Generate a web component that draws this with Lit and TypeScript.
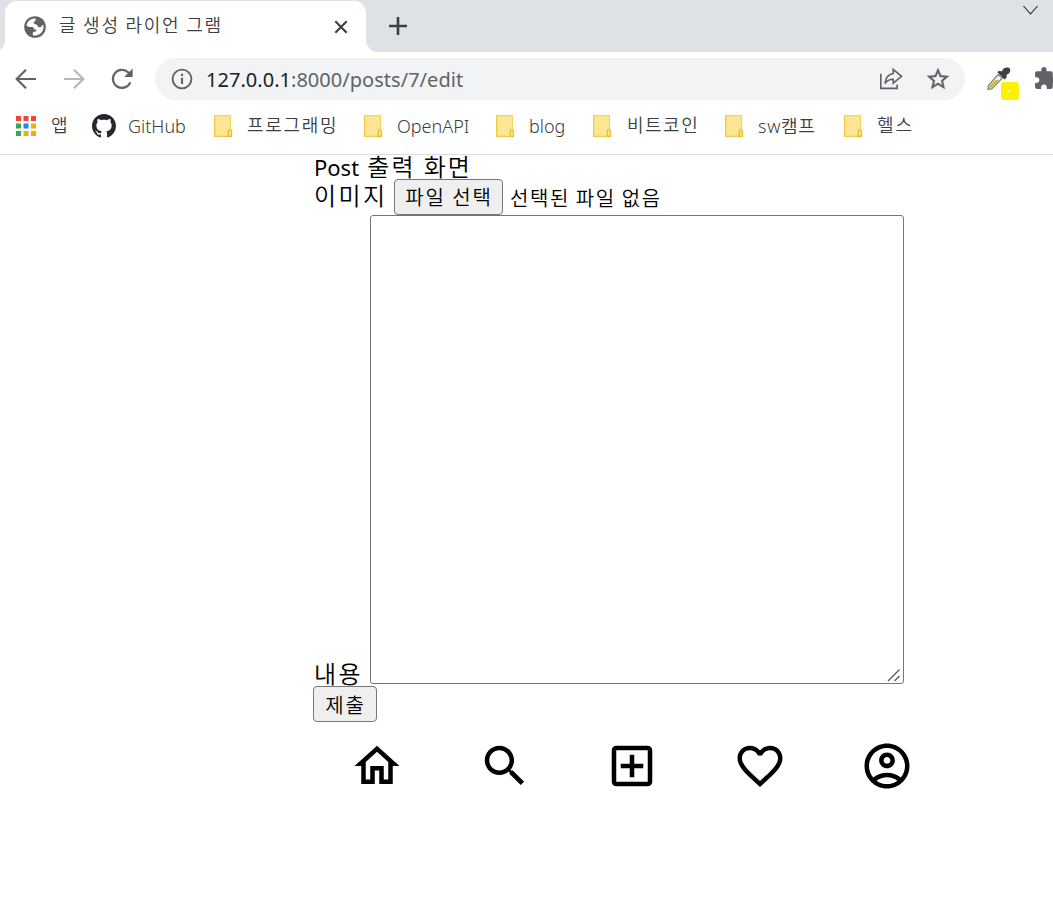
import { LitElement, html, css, svg } from "lit";
import { customElement } from "lit/decorators.js";
import { styleMap } from "lit/directives/style-map.js";

const sans = css`"Noto Sans", "Noto Sans CJK KR", sans-serif`;
const hangul = css`"Noto Sans CJK KR", "Noto Sans", sans-serif`;

@customElement("browser-tabs")
class BrowserTabs extends LitElement {
  static styles = css`
    :host { display: flex; height: 52px; background: #dee1e6; font-family: ${hangul}; }
    .tab { box-sizing: border-box; width: 361px; height: 51px; margin: 1px 0 0 5px; padding: 0 18px 0 19px;
      border-radius: 12px 12px 0 0; background: #fff; display: flex; align-items: center; position: relative; }
    .tab::before, .tab::after { content: ""; position: absolute; bottom: 0; width: 12px; height: 12px; }
    .tab::before { left: -12px; background: radial-gradient(circle at 0 0, #dee1e6 11.5px, #fff 12.5px); }
    .tab::after { right: -12px; background: radial-gradient(circle at 100% 0, #dee1e6 11.5px, #fff 12.5px); }
    .title { flex: 1; margin: -6px 0 0 13px; font-size: 18px; font-weight: 350; letter-spacing: 1.75px; color: #3c4043; white-space: nowrap; }
    svg { display: block; flex: none; }
    .plus { margin: 16px 0 0 22px; }
    .down { margin: 5px 14px 0 auto; }
  `;
  render() {
    return html`
      <div class="tab">
        <svg width="22" height="22" viewBox="0 0 22 22">
          <circle cx="11" cy="11" r="10.8" fill="#5f6368" />
          <path fill="#fff" d="M10.8 2.4 C6.5 2.4 3.2 5.5 2.5 9.3 C3.5 10.8 5.5 11.2 8 11.1 C9.4 11.2 10.2 12.1 10.2 13.4 L12.3 13.5 V15.3 C10.9 15.6 9.4 15.7 8.8 16.8 V19.2 C13.2 20.3 17.8 17.8 19.1 13.7 C19.6 12.2 19.7 10.8 19.4 9.4 C18.6 8.8 18.2 9 17.5 10.2 C16.4 11.9 14.3 11.6 13.7 10.2 C13.3 9.2 13.3 8.5 12.4 8.4 C10.7 8.4 9.5 7.5 9.8 6.3 C10 5.4 10.7 5.6 11.4 4.7 C11.7 4.2 11.8 3 11.5 2.4 Z" />
        </svg>
        <span class="title">글 생성 라이언 그램</span>
        <svg width="14" height="14" viewBox="0 0 14 14"><path d="M1.3 1.3 12.7 12.7M12.7 1.3 1.3 12.7" stroke="#3c4043" stroke-width="2.2" /></svg>
      </div>
      <svg class="plus" width="20" height="20" viewBox="0 0 20 20"><path d="M10 1V19M1 10H19" stroke="#3c4043" stroke-width="2.6" /></svg>
      <svg class="down" width="17" height="11" viewBox="0 0 17 11"><path d="M1.5 1 8.5 9 15.5 1" fill="none" stroke="#222" stroke-width="1.1" /></svg>
    `;
  }
}

@customElement("browser-toolbar")
class BrowserToolbar extends LitElement {
  static styles = css`
    :host { display: flex; align-items: center; height: 54px; overflow: hidden; font-family: ${sans}; color: #5f6368; }
    svg { display: block; flex: none; }
    .nav { display: flex; flex: none; width: 155px; height: 24px; padding-left: 14px; box-sizing: border-box; gap: 24px; }
    .omnibox { box-sizing: border-box; display: flex; flex: none; align-items: center; width: 810px; height: 42px; border-radius: 21px;
      background: #f1f3f4; padding: 0 16px; }
    .url { flex: 1; margin: 2px 0 0 13px; font-size: 20px; line-height: 28px; letter-spacing: 0.03px; white-space: nowrap; }
    .host { color: #202124; }
    .share { margin-right: 24px; }
    .dropper { margin: 10px 0 0 20px; }
    .puzzle { margin: -1px 0 0 13px; }
  `;
  render() {
    return html`
      <div class="nav">
        <svg width="24" height="24" viewBox="0 0 24 24"><path d="M22 12H3.5M12 2.7 2.7 12 12 21.3" fill="none" stroke="#5f6368" stroke-width="2.2" /></svg>
        <svg width="24" height="24" viewBox="0 0 24 24"><path d="M2 12H20.5M12 2.7 21.3 12 12 21.3" fill="none" stroke="#b5b7b9" stroke-width="2.2" /></svg>
        <svg width="24" height="24" viewBox="0 0 24 24"><path d="M20.3 15.3A9 9 0 1 1 18.4 5.6L20.4 7.6" fill="none" stroke="#5f6368" stroke-width="2.2" /><path d="M22.6 1.6V10H14.2Z" fill="#5f6368" /></svg>
      </div>
      <div class="omnibox">
        <svg width="22" height="22" viewBox="0 0 22 22"><circle cx="11" cy="11" r="9.4" fill="none" stroke="#5f6368" stroke-width="1.9" /><path d="M11 9.7V16M11 5.7V7.9" stroke="#5f6368" stroke-width="2.1" /></svg>
        <span class="url"><span class="host">127.0.0.1</span>:8000/posts/7/edit</span>
        <svg class="share" width="24" height="24" viewBox="0 0 24 24" fill="none" stroke="#5f6368" stroke-width="1.6"><path d="M1.8 6.8V21.4H18.2V17.5" /><path d="M14.2 2.4 22.5 9.3 14.2 16.2V12.3C10.4 12.3 8 13.5 6 16.5C6.5 10.8 9.5 7.3 14.2 6.5Z" /></svg>
        <svg width="22" height="22" viewBox="2 2 20 20"><path fill="#5f6368" stroke="#5f6368" stroke-width=".3" d="M22 9.24l-7.19-.62L12 2 9.19 8.63 2 9.24l5.46 4.73L5.82 21 12 17.27 18.18 21l-1.63-7.03L22 9.24zM12 15.4l-3.76 2.27 1-4.28-3.32-2.88 4.38-.38L12 6.1l1.71 4.04 4.38.38-3.32 2.88 1 4.28L12 15.4z" /></svg>
      </div>
      <svg class="dropper" width="36" height="36" viewBox="0 0 36 36">
        <path d="M3 23.5 3.4 19.5 13.2 8.5 17.2 12.2 7 22.6Z" fill="#f4f4e8" stroke="#858580" stroke-width="1.3" />
        <path d="M4 22.5 4.6 19.7 10.5 14H14L6.7 21.6Z" fill="#c9bd27" />
        <path d="M12.2 6 14.6 4.800 17 5.500C17.400 2.600 19.800 1.400 22.600 1.500 26.400 1.600 26.400 7.300 21.600 8.800L21.600 11.600 19.400 13.400Z" fill="#3e4143" />
        <rect x="16" y="16" width="18" height="18" rx="3" fill="#fff200" /><circle cx="23.5" cy="25" r=".9" fill="#fff" />
      </svg>
      <svg class="puzzle" width="23" height="23" viewBox="1 1 22 22"><path fill="#5f6368" d="M20.5 11H19V7c0-1.100-.9-2-2-2h-4V3.500C13 2.120 11.880 1 10.500 1S8 2.120 8 3.500V5H4c-1.100 0-2 .9-2 2v3.800H3.500c1.500 0 2.700 1.200 2.700 2.700s-1.200 2.700-2.700 2.700H2V20c0 1.100.9 2 2 2h3.800v-1.500c0-1.500 1.200-2.700 2.700-2.700s2.700 1.200 2.700 2.700V22H17c1.100 0 2-.9 2-2v-4h1.500c1.380 0 2.500-1.120 2.500-2.500S21.880 11 20.500 11z" /></svg>
    `;
  }
}

const appsIcon = svg`<svg width="20" height="20" viewBox="0 0 20 20">${[
  ["#f44336", "#f44336", "#f44336"],
  ["#34a853", "#1e88f5", "#fbab00"],
  ["#34a853", "#fbab00", "#fbab00"],
].map((row, y) => row.map((c, x) => svg`<rect x=${x * 7.5} y=${y * 7.5} width="5" height="5" fill=${c} />`))}</svg>`;

const githubIcon = svg`<svg width="24" height="24" viewBox="0 0 16 16"><path fill="#24292f" d="M8 0C3.58 0 0 3.58 0 8c0 3.54 2.29 6.53 5.47 7.59.4.07.55-.17.55-.38 0-.19-.01-.82-.01-1.490-2.010.37-2.530-.49-2.690-.94-.09-.23-.48-.94-.82-1.130-.28-.15-.68-.52-.01-.53.63-.01 1.080.58 1.230.82.72 1.210 1.870.87 2.330.66.07-.52.28-.87.51-1.070-1.780-.2-3.640-.89-3.640-3.950 0-.87.31-1.590.82-2.150-.08-.2-.36-1.020.08-2.120 0 0 .67-.21 2.200.82.64-.18 1.320-.27 2-.27s1.360.09 2 .27c1.530-1.040 2.200-.82 2.200-.82.44 1.100.16 1.920.08 2.120.51.56.82 1.270.82 2.150 0 3.070-1.870 3.750-3.650 3.950.29.25.54.73.54 1.480 0 1.070-.01 1.930-.01 2.200 0 .21.15.46.55.38A8.010 8.010 0 0 0 16 8c0-4.420-3.580-8-8-8z" /></svg>`;

const folderIcon = svg`<svg width="19" height="22" viewBox="0 0 19 22"><path d="M.7.7H16.5V21.3H.7Z" fill="#ffe694" stroke="#f7d55c" stroke-width="1.2" /><path d="M.7.5V21.300H14" fill="none" stroke="#efcb4c" stroke-width="1.200" /><path d="M14.2 21.300V16.200Q14.200 14.700 15.800 14.700T17.500 16.200V21.300Z" fill="#ffe27a" stroke="#e8bd35" stroke-width="1.200" /></svg>`;

const bookmarks = [
  { label: "앱", icon: appsIcon, width: 76, text: 35, spacing: 0, lift: 3 },
  { label: "GitHub", icon: githubIcon, width: 122, text: 36, spacing: 0, lift: 1 },
  { label: "프로그래밍", icon: folderIcon, width: 150, text: 33, spacing: 1.7, lift: 3 },
  { label: "OpenAPI", icon: folderIcon, width: 132, text: 33, spacing: 0, lift: 1 },
  { label: "blog", icon: folderIcon, width: 97, text: 33, spacing: 0, lift: 1 },
  { label: "비트코인", icon: folderIcon, width: 132, text: 34, spacing: 1.5, lift: 3 },
  { label: "sw캠프", icon: folderIcon, width: 119, text: 33, spacing: 0.7, lift: 1 },
  { label: "헬스", icon: folderIcon, width: 80, text: 33, spacing: 2, lift: 3 },
];

@customElement("bookmark-bar")
class BookmarkBar extends LitElement {
  static styles = css`
    :host { display: flex; align-items: center; box-sizing: border-box; height: 49px; padding: 0 0 8px 16px;
      border-bottom: 1px solid #dadce0; font-family: ${sans}; color: #3c4043; }
    .bookmark { display: flex; align-items: center; height: 26px; flex: none; }
    .icon { flex: none; }
    .icon svg { display: block; }
    .label { font-size: 18px; line-height: 24px; font-weight: 350; white-space: nowrap; }
  `;
  render() {
    return bookmarks.map(
      (b) => html`<div class="bookmark" style=${styleMap({ width: `${b.width}px` })}>
        <span class="icon" style=${styleMap({ width: `${b.text}px` })}>${b.icon}</span>
        <span class="label" style=${styleMap({ letterSpacing: `${b.spacing}px`, paddingBottom: `${b.lift}px` })}>${b.label}</span>
      </div>`
    );
  }
}

const navIcons = [
  "M12 5.69l5 4.5V18h-2v-6H9v6H7v-7.81l5-4.5M12 3L2 12h3v8h6v-6h2v6h6v-8h3L12 3z",
  "M15.5 14h-.79l-.28-.27C15.41 12.59 16 11.11 16 9.5 16 5.91 13.09 3 9.5 3S3 5.91 3 9.5 5.91 16 9.5 16c1.61 0 3.090-.59 4.230-1.570l.27.28v.79l5 4.990L20.490 19l-4.990-5zm-6 0C7.010 14 5 11.990 5 9.500S7.010 5 9.500 5 14 7.010 14 9.500 11.990 14 9.500 14z",
  "M19 3H5c-1.110 0-2 .9-2 2v14c0 1.100.89 2 2 2h14c1.100 0 2-.9 2-2V5c0-1.100-.9-2-2-2zm0 16H5V5h14v14zm-8-2h2v-4h4v-2h-4V7h-2v4H7v2h4z",
  "M16.5 3c-1.740 0-3.410.81-4.500 2.090C10.910 3.810 9.240 3 7.500 3 4.420 3 2 5.420 2 8.500c0 3.780 3.400 6.860 8.550 11.540L12 21.350l1.450-1.320C18.600 15.360 22 12.280 22 8.500 22 5.420 19.580 3 16.500 3zm-4.400 15.550l-.1.1-.1-.1C7.140 14.240 4 11.390 4 8.500 4 6.500 5.500 5 7.500 5c1.540 0 3.040.99 3.570 2.360h1.870C13.460 5.990 14.960 5 16.500 5c2 0 3.500 1.500 3.500 3.500 0 2.890-3.140 5.740-7.900 10.050z",
  "M12 2C6.480 2 2 6.480 2 12s4.480 10 10 10 10-4.480 10-10S17.520 2 12 2zM7.350 18.500C8.660 17.560 10.260 17 12 17s3.340.56 4.650 1.500C15.340 19.440 13.740 20 12 20s-3.340-.56-4.650-1.500zm10.790-1.380C16.450 15.800 14.320 15 12 15s-4.450.8-6.140 2.120C4.700 15.730 4 13.950 4 12c0-4.420 3.580-8 8-8s8 3.580 8 8c0 1.950-.7 3.730-1.860 5.120zM12 6c-1.930 0-3.500 1.570-3.500 3.500S10.070 13 12 13s3.500-1.570 3.500-3.500S13.930 6 12 6zm0 5c-.83 0-1.500-.67-1.500-1.500S11.170 8 12 8s1.500.67 1.500 1.500S12.830 11 12 11z",
];

@customElement("post-editor")
class PostEditor extends LitElement {
  static styles = css`
    :host { display: block; width: 638px; margin-left: 313px; color: #000; font-family: ${sans}; font-size: 24px; font-weight: 350; }
    .heading { height: 24px; line-height: 24px; white-space: nowrap; padding-left: 1px; letter-spacing: 2px; }
    .latin { font-size: 22px; font-weight: 400; letter-spacing: 0; }
    .row { display: flex; }
    .file { height: 36px; }
    .label { line-height: 34px; width: 81px; padding-left: 1px; box-sizing: border-box; white-space: nowrap; letter-spacing: 2.4px; }
    button { box-sizing: border-box; height: 36px; margin: 0; padding: 0 0 0 1px; border: 1px solid #767676; border-radius: 4px; background: #efefef;
      color: #000; font: 350 20px/32px ${hangul}; letter-spacing: 1.9px; white-space: nowrap; }
    .choose { width: 109px; }
    .status { margin-left: 7px; font: 350 20px/38px ${hangul}; letter-spacing: 1.55px; white-space: nowrap; }
    .body { height: 470px; align-items: flex-end; }
    .body .label { width: 57px; line-height: 24px; height: 23px; }
    .area { box-sizing: border-box; width: 534px; height: 469px; border: 1px solid #767676; border-radius: 3px; align-self: flex-start;
      display: flex; justify-content: flex-end; align-items: flex-end; padding: 0 2px 1px 0; }
    .submit { display: block; width: 64px; margin-top: 1px; padding-top: 1px; }
    nav { display: flex; margin-top: 17px; }
    nav span { flex: 1; display: flex; justify-content: center; }
    nav span:nth-child(2) svg { margin-left: 1px; }
  `;
  render() {
    return html`
      <div class="heading"><span class="latin">Post</span> 출력 화면</div>
      <div class="row file">
        <span class="label">이미지</span>
        <button class="choose">파일 선택</button>
        <span class="status">선택된 파일 없음</span>
      </div>
      <div class="row body">
        <span class="label">내용</span>
        <div class="area" role="textbox">
          <svg width="14" height="14" viewBox="0 0 14 14"><path d="M1 13 12.500 1.500M7.500 13 12.500 8" stroke="#555" stroke-width="1.300" /></svg>
        </div>
      </div>
      <button class="submit">제출</button>
      <nav>${navIcons.map((d) => html`<span><svg width="54" height="54" viewBox="0 0 24 24"><path d=${d} /></svg></span>`)}</nav>
    `;
  }
}

@customElement("app-root")
class AppRoot extends LitElement {
  static styles = css`
    :host { display: block; height: 904px; overflow: hidden; background: #fff; }
  `;
  render() {
    return html`<browser-tabs></browser-tabs><browser-toolbar></browser-toolbar><bookmark-bar></bookmark-bar><post-editor></post-editor>`;
  }
}
